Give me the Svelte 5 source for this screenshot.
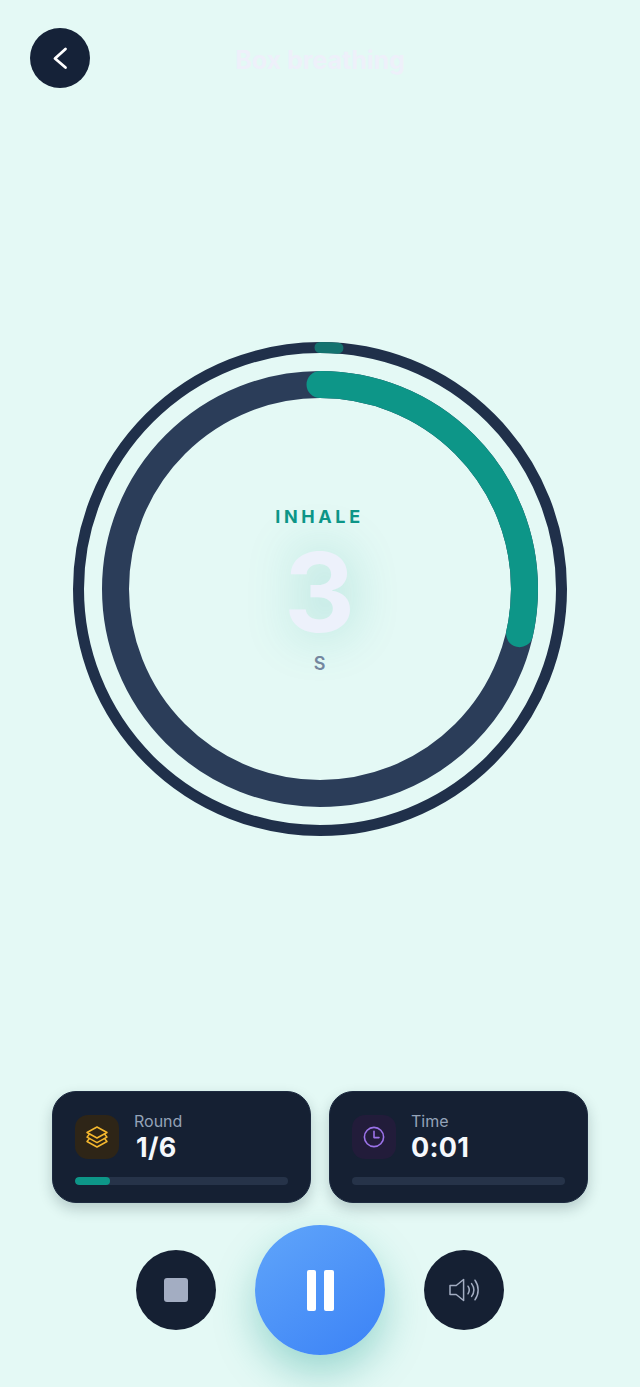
<script>
  const size = 496;
  const c = size / 2;
  const innerR = 204.5;
  const outerR = 241.5;
  const innerLen = 2 * Math.PI * innerR;
  const outerLen = 2 * Math.PI * outerR;
  let progress = 0.285;
  let roundPct = 16.5;
</script>

<div class="page">
  <header class="top">
    <button class="back" aria-label="Back">
      <svg width="24" height="24" viewBox="0 0 24 24" fill="none" stroke="#fff" stroke-width="2.8" stroke-linecap="round" stroke-linejoin="round">
        <path d="M17.5 3 L7 12.5 L17.5 21.5" />
      </svg>
    </button>
    <h1 class="title">Box breathing</h1>
  </header>

  <main class="stage">
    <div class="ring">
      <svg width={size} height={size} viewBox="0 0 {size} {size}" fill="none">
        <circle cx={c} cy={c} r={outerR} stroke="#20304a" stroke-width="11" />
        <circle cx={c} cy={c} r={outerR} stroke="#14736f" stroke-width="11" stroke-linecap="round"
          stroke-dasharray="18 {outerLen}" transform="rotate(-90 {c} {c})" />
        <circle cx={c} cy={c} r={innerR} stroke="#2b3d59" stroke-width="27" />
        <circle cx={c} cy={c} r={innerR} stroke="#0d9688" stroke-width="27" stroke-linecap="round"
          stroke-dasharray="{innerLen * progress} {innerLen}" transform="rotate(-90 {c} {c})" />
      </svg>
      <div class="readout">
        <div class="phase">INHALE</div>
        <div class="count">3</div>
        <div class="unit">S</div>
      </div>
    </div>
  </main>

  <section class="stats">
    <div class="card">
      <div class="row">
        <div class="icon amber">
          <svg width="24" height="24" viewBox="0 0 24 24" fill="none" stroke="#f5b82e" stroke-width="1.5" stroke-linejoin="round" stroke-linecap="round">
            <path d="M12 2 22 7.5 12 13 2 7.5z" />
            <path d="M4.5 9 2 12.2 12 17.7 22 12.2 19.5 9" />
            <path d="M4.5 13.5 2 16.5 12 22 22 16.5 19.5 13.5" />
          </svg>
        </div>
        <div class="text">
          <div class="label">Round</div>
          <div class="value first">1/6</div>
        </div>
      </div>
      <div class="bar"><div class="fill" style="width: {roundPct}%"></div></div>
    </div>

    <div class="card">
      <div class="row">
        <div class="icon violet">
          <svg width="24" height="24" viewBox="0 0 24 24" fill="none" stroke="#9b72e8" stroke-width="1.6" stroke-linecap="round" stroke-linejoin="round">
            <circle cx="12" cy="12" r="9.6" />
            <path d="M12 6.2V12.6H17" />
          </svg>
        </div>
        <div class="text">
          <div class="label">Time</div>
          <div class="value">0:01</div>
        </div>
      </div>
      <div class="bar"></div>
    </div>
  </section>

  <section class="controls">
    <button class="ctl" aria-label="Stop"><span class="stop"></span></button>
    <button class="play" aria-label="Pause">
      <span class="pause"></span><span class="pause"></span>
    </button>
    <button class="ctl" aria-label="Sound">
      <svg width="32" height="32" viewBox="0 0 32 32" fill="none" stroke="#a3adc2" stroke-width="1.5" stroke-linecap="round" stroke-linejoin="round">
        <path d="M2 11.5h6.2L15.6 5.5v21L8.2 20.5H2z" />
        <path d="M20 12.2c1.6 2.4 1.6 5.2 0 7.6" />
        <path d="M23.6 9.6c2.8 3.9 2.8 8.9 0 12.8" />
        <path d="M27 6.2c4.2 5.9 4.2 13.7 0 19.6" />
      </svg>
    </button>
  </section>
</div>

<style>
  :global(body) {
    margin: 0;
    background: #e4f9f5;
  }
  .page {
    width: 640px;
    height: 1387px;
    display: flex;
    flex-direction: column;
    overflow: hidden;
    background: #e4f9f5;
    font-family: Inter, "Liberation Sans", sans-serif;
  }
  button {
    border: 0;
    padding: 0;
    cursor: pointer;
    display: flex;
    align-items: center;
    justify-content: center;
  }

  .top {
    position: relative;
    display: flex;
    align-items: center;
    justify-content: center;
    height: 60px;
    padding-top: 28px;
  }
  .back {
    position: absolute;
    left: 30px;
    top: 28px;
    width: 60px;
    height: 60px;
    border-radius: 50%;
    background: #152238;
  }
  .title {
    margin: 4px 0 0;
    font-size: 25px;
    font-weight: 700;
    color: #eef0fa;
  }

  .stage {
    flex: 1;
    display: flex;
    align-items: center;
    justify-content: center;
  }
  .ring {
    position: relative;
    width: 496px;
    height: 496px;
    margin: 0 1px 1px 0;
  }
  .ring svg {
    display: block;
  }
  .readout {
    position: absolute;
    inset: 0;
    display: flex;
    flex-direction: column;
    align-items: center;
    justify-content: center;
  }
  .phase {
    font-size: 18px;
    font-weight: 700;
    letter-spacing: 3.6px;
    color: #0d9688;
    line-height: 22px;
  }
  .count {
    font-size: 110px;
    font-weight: 700;
    line-height: 128px;
    color: #edf1fb;
    text-shadow: 0 0 50px rgba(13, 150, 136, 0.3);
  }
  .unit {
    font-size: 18px;
    font-weight: 600;
    color: #74869f;
    line-height: 16px;
  }

  .stats {
    display: flex;
    gap: 18px;
    padding: 0 52px;
  }
  .card {
    flex: 1;
    box-sizing: border-box;
    height: 112px;
    padding: 23px 22px 0;
    border: 1px solid #1d2a40;
    border-radius: 24px;
    background: #152033;
    box-shadow: 0 6px 14px rgba(15, 40, 50, 0.22);
  }
  .row {
    display: flex;
    gap: 15px;
    height: 44px;
  }
  .icon {
    width: 44px;
    height: 44px;
    border-radius: 13px;
    display: flex;
    align-items: center;
    justify-content: center;
  }
  .amber {
    background: #2e2517;
  }
  .violet {
    background: #221c3a;
  }
  .text {
    display: flex;
    flex-direction: column;
  }
  .label {
    font-size: 16px;
    line-height: 20px;
    color: #94a3b8;
    margin-top: -4px;
  }
  .value {
    font-size: 27px;
    font-weight: 700;
    line-height: 32px;
    letter-spacing: 0.3px;
    color: #f5f8fc;
    margin-top: 1px;
  }
  .value.first {
    margin-left: 2px;
  }
  .bar {
    height: 8px;
    margin-top: 18px;
    border-radius: 4px;
    background: #263349;
    overflow: hidden;
  }
  .fill {
    height: 100%;
    border-radius: 4px;
    background: #0d9688;
  }

  .controls {
    display: flex;
    align-items: center;
    justify-content: center;
    gap: 39px;
    margin-top: 22px;
    margin-bottom: 32px;
  }
  .ctl {
    width: 80px;
    height: 80px;
    border-radius: 50%;
    background: #152033;
  }
  .stop {
    width: 24px;
    height: 24px;
    border-radius: 3px;
    background: #a3adc2;
  }
  .play {
    width: 130px;
    height: 130px;
    border-radius: 50%;
    gap: 8px;
    background: linear-gradient(145deg, #60a5fa, #3b82f6);
    box-shadow: 0 18px 40px rgba(13, 150, 136, 0.34);
  }
  .pause {
    width: 9.5px;
    height: 41px;
    border-radius: 2px;
    background: #fff;
  }
</style>
